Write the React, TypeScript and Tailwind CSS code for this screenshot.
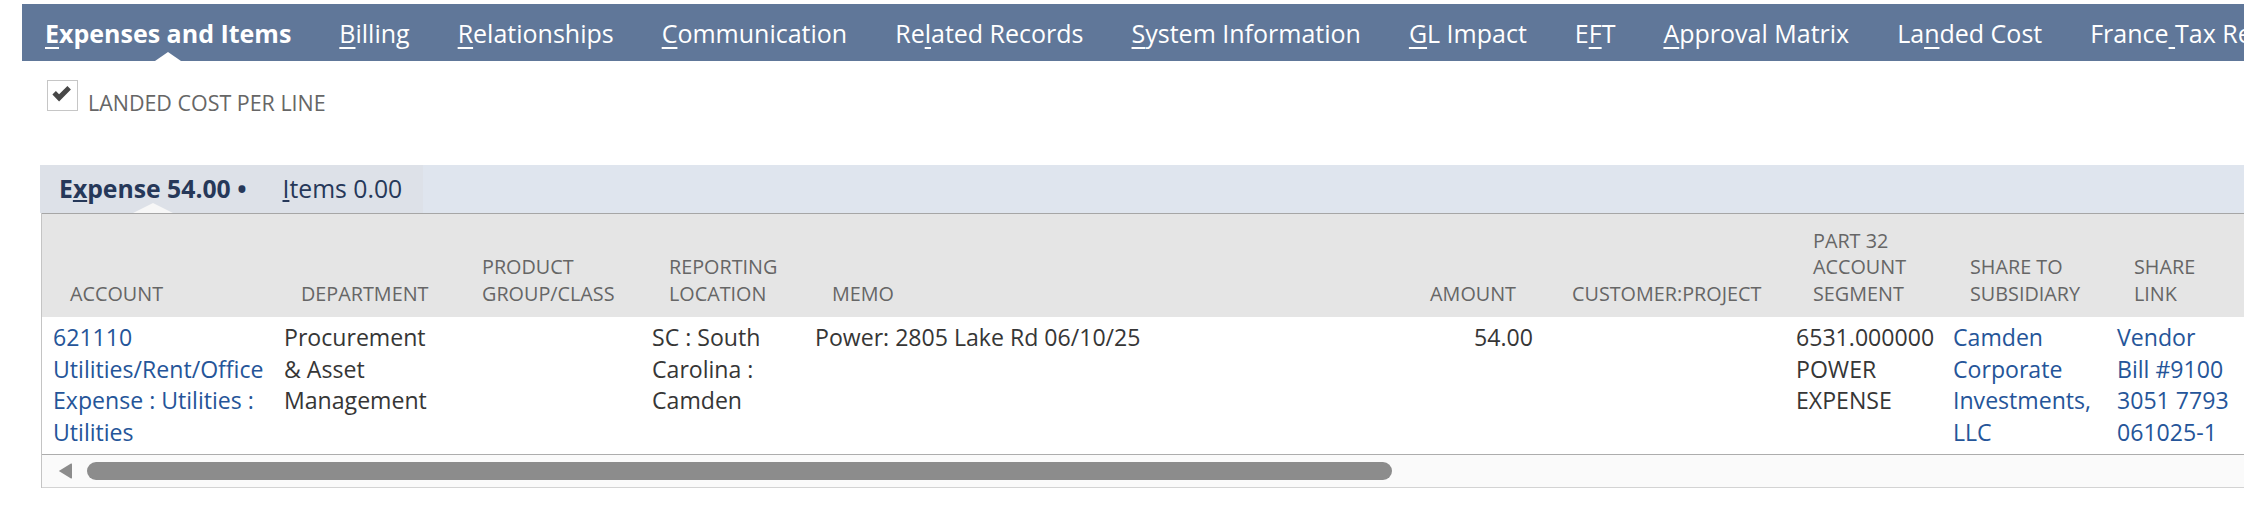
import React from "react";

type Tab = { pre: string; u: string; post: string; active?: boolean };

const tabs: Tab[] = [
  { pre: "", u: "E", post: "xpenses and Items", active: true },
  { pre: "", u: "B", post: "illing" },
  { pre: "", u: "R", post: "elationships" },
  { pre: "", u: "C", post: "ommunication" },
  { pre: "Re", u: "l", post: "ated Records" },
  { pre: "", u: "S", post: "ystem Information" },
  { pre: "", u: "G", post: "L Impact" },
  { pre: "E", u: "F", post: "T" },
  { pre: "", u: "A", post: "pproval Matrix" },
  { pre: "La", u: "n", post: "ded Cost" },
  { pre: "France", u: "\u00a0", post: "Tax Reporting" },
];

const cols =
  "grid grid-cols-[231px_181px_187px_163px_596px_144px_241px_157px_164px_250px]";

const headers: { lines: string[]; right?: boolean }[] = [
  { lines: ["ACCOUNT"] },
  { lines: ["DEPARTMENT"] },
  { lines: ["PRODUCT", "GROUP/CLASS"] },
  { lines: ["REPORTING", "LOCATION"] },
  { lines: ["MEMO"] },
  { lines: ["AMOUNT"], right: true },
  { lines: ["CUSTOMER:PROJECT"] },
  { lines: ["PART 32", "ACCOUNT", "SEGMENT"] },
  { lines: ["SHARE TO", "SUBSIDIARY"] },
  { lines: ["SHARE", "LINK"] },
];

const cells: { lines: string[]; link?: boolean; right?: boolean }[] = [
  { lines: ["621110", "Utilities/Rent/Office", "Expense : Utilities :", "Utilities"], link: true },
  { lines: ["Procurement", "& Asset", "Management"] },
  { lines: [] },
  { lines: ["SC : South", "Carolina :", "Camden"] },
  { lines: ["Power: 2805 Lake Rd 06/10/25"] },
  { lines: ["54.00"], right: true },
  { lines: [] },
  { lines: ["6531.000000", "POWER", "EXPENSE"] },
  { lines: ["Camden", "Corporate", "Investments,", "LLC"], link: true },
  { lines: ["Vendor", "Bill #9100", "3051 7793", "061025-1"], link: true },
];

export default function App() {
  return (
    <div className="w-[2244px] h-[516px] overflow-hidden bg-white pt-[4px] font-['Open_Sans',sans-serif]">
      {/* Main tab bar */}
      <div className="ml-[22px] h-[57px] bg-[#607799] flex pl-[23px] gap-[48px] whitespace-nowrap text-white text-[25px]">
        {tabs.map((t, i) => (
          <div
            key={i}
            className={`relative h-full leading-[59px] ${t.active ? "font-bold" : "font-normal"}`}
          >
            {t.pre}
            <u className="underline decoration-[2px] underline-offset-[4px]">{t.u}</u>
            {t.post}
            {t.active && (
              <span className="absolute bottom-0 left-1/2 -translate-x-1/2 w-0 h-0 border-l-[13px] border-r-[13px] border-b-[9px] border-l-transparent border-r-transparent border-b-white" />
            )}
          </div>
        ))}
      </div>

      {/* Checkbox row */}
      <div className="ml-[47px] mt-[19px] flex items-start">
        <div className="relative w-[31px] h-[31px] border border-[#c6c6c6] bg-white shrink-0">
          <svg
            className="absolute left-[4px] top-[5px]"
            width="20"
            height="17"
            viewBox="0 0 20 17"
          >
            <path d="M0.4 8.6 L3.9 5.1 L7.1 8.3 L15.4 0 L18.9 3.5 L7.1 15.4 Z" fill="#474747" />
          </svg>
        </div>
        <span className="ml-[10px] mt-[8px] text-[21.45px] leading-[29px] text-[#666666] whitespace-nowrap">
          LANDED COST PER LINE
        </span>
      </div>

      {/* Sub tabs */}
      <div className="ml-[40px] mt-[48px] h-[48px] bg-[#dfe5ee] flex">
        <div className="flex bg-[#dde1e8] pl-[19px] pr-[21px] gap-[36px] text-[24.75px] leading-[48px] text-[#263859] whitespace-nowrap">
          <div className="relative font-bold">
            E<u className="underline decoration-[2px] underline-offset-[2px]">x</u>pense 54.00 •
            <span className="absolute bottom-0 left-1/2 -translate-x-1/2 w-0 h-0 border-l-[20px] border-r-[20px] border-b-[10px] border-l-transparent border-r-transparent border-b-[#f7f7f7]" />
          </div>
          <div>
            <u className="underline decoration-[2px] underline-offset-[2px]">I</u>tems 0.00
          </div>
        </div>
      </div>

      {/* Table */}
      <div className="ml-[41px] w-[2400px] border-l border-[#c4c4c4]">
        <div className={`${cols} border-t border-[#a6a6a6] bg-[#e5e5e5]`}>
          {headers.map((h, i) => (
            <div
              key={i}
              className={`flex flex-col justify-end pt-[14px] pb-[10px] pl-[28px] pr-[10px] text-[19.8px] leading-[26.4px] text-[#666666] whitespace-nowrap ${
                h.right ? "items-end pr-[28px]" : "items-start"
              }`}
            >
              {h.lines.map((l, j) => (
                <span key={j}>{l}</span>
              ))}
            </div>
          ))}
        </div>
        <div className={`${cols} bg-white border-b border-[#adadad]`}>
          {cells.map((c, i) => (
            <div
              key={i}
              className={`flex flex-col pt-[5px] pb-[6px] px-[11px] text-[23.1px] leading-[31.5px] whitespace-nowrap ${
                c.right ? "items-end" : "items-start"
              } ${c.link ? "text-[#255599]" : "text-[#363636]"}`}
            >
              {c.lines.map((l, j) => (
                <span key={j}>{l}</span>
              ))}
            </div>
          ))}
        </div>
        <div className="h-[33px] bg-[#fafafa] border-b border-[#d3d3d3] flex items-start">
          <svg className="ml-[16px] mt-[8px]" width="14" height="16" viewBox="0 0 14 16">
            <path d="M0.8 8 L13 0.6 Q14 0 14 1.2 L14 14.8 Q14 16 13 15.4 Z" fill="#8c8c8c" />
          </svg>
          <div className="ml-[15px] mt-[7px] w-[1305px] h-[18px] rounded-full bg-[#8c8c8c]" />
        </div>
      </div>
    </div>
  );
}
